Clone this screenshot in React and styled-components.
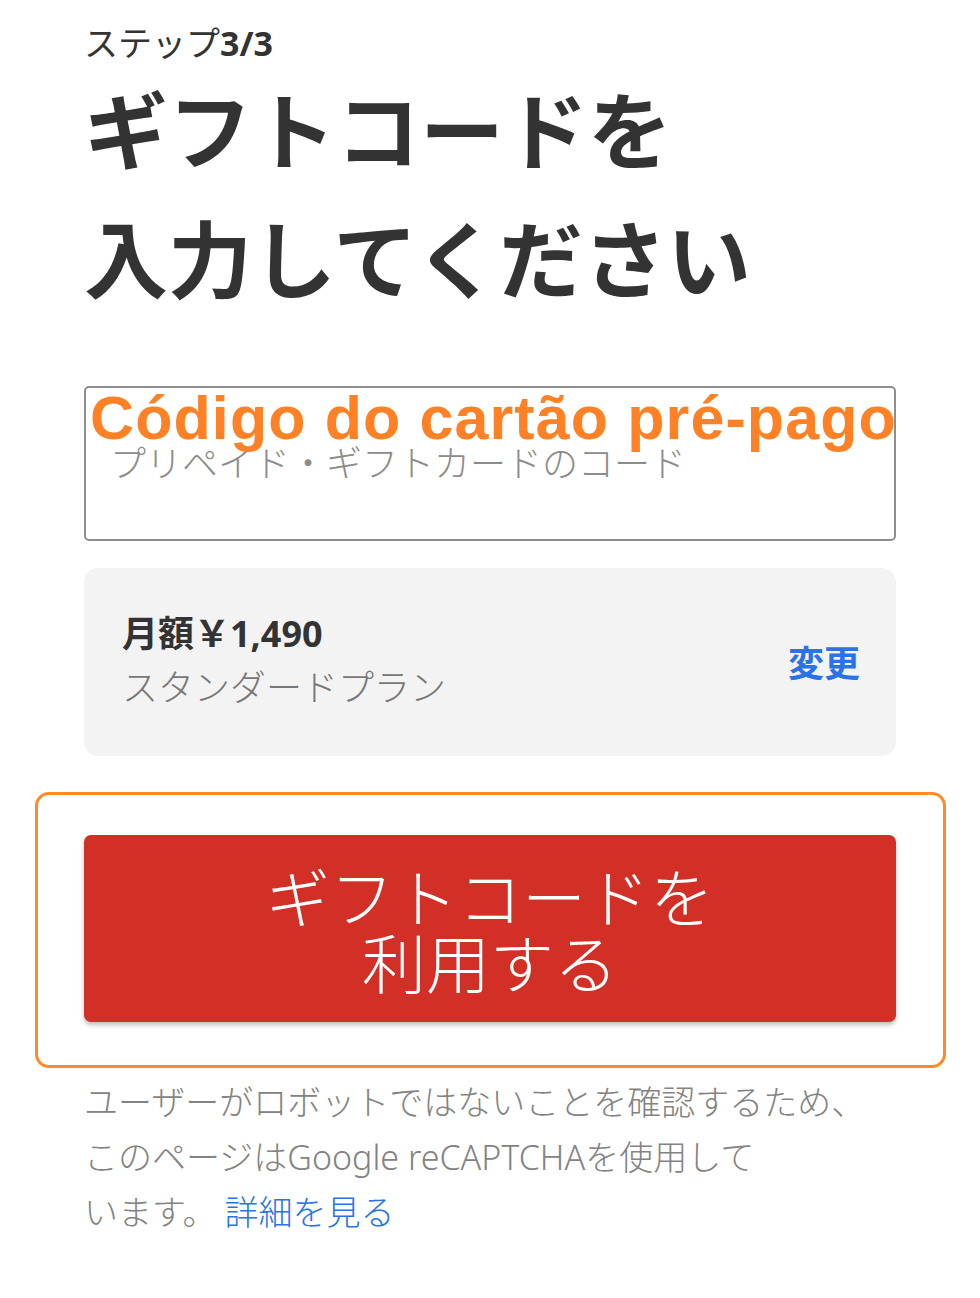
import React from "react"
import styled, { createGlobalStyle } from "styled-components"

const GlobalStyle = createGlobalStyle`
  html, body {
    margin: 0;
    padding: 0;
    background: #ffffff;
  }
  body {
    font-family: "Noto Sans", "Noto Sans CJK JP", sans-serif;
    color: #333333;
  }
`

const Page = styled.main`
  width: 812px;
  padding: 20px 0 60px 84px;
`

const Step = styled.div`
  font-size: 34px;
  line-height: 46px;
  font-weight: 400;
  color: #333333;
  b {
    font-weight: 700;
  }
`

const Title = styled.h1`
  margin: 0;
  font-size: 84px;
  line-height: 129px;
  font-weight: 700;
  color: #333333;
`

const Field = styled.label`
  position: relative;
  display: flex;
  flex-direction: column;
  box-sizing: border-box;
  height: 155px;
  margin-top: 62px;
  border: 2px solid #8e8e8e;
  border-radius: 5px;
  background: #fff;
`

const Overlay = styled.span`
  position: absolute;
  top: 0;
  left: 4px;
  font-family: "Liberation Sans", Arial, sans-serif;
  font-weight: 700;
  font-size: 61px;
  line-height: 1;
  letter-spacing: 1.1px;
  color: #ff8125;
  white-space: nowrap;
  pointer-events: none;
`

const Input = styled.input`
  margin-top: 46px;
  padding: 0 24px;
  height: 54px;
  border: none;
  outline: none;
  background: transparent;
  font-family: "Noto Sans CJK JP", sans-serif;
  font-size: 36px;
  font-weight: 300;
  color: #333;
  &::placeholder {
    color: #8c8c8c;
  }
`

const PlanCard = styled.section`
  display: flex;
  align-items: center;
  justify-content: space-between;
  box-sizing: border-box;
  height: 188px;
  margin-top: 27px;
  padding: 0 36px 2px 38px;
  background: #f3f3f3;
  border-radius: 14px;
`

const PlanInfo = styled.div`
  display: flex;
  flex-direction: column;
  font-size: 36px;
  line-height: 54px;
`

const Price = styled.span`
  font-weight: 700;
  color: #333333;
`

const PlanName = styled.span`
  font-weight: 300;
  color: #777777;
`

const Change = styled.a`
  font-size: 36px;
  font-weight: 700;
  color: #2a73e6;
  text-decoration: none;
`

const Highlight = styled.div`
  margin: 36px -50px 0 -49px;
  padding: 40px 47px 43px 46px;
  border: 3px solid #ff8a2b;
  border-radius: 14px;
`

const SubmitButton = styled.button`
  display: block;
  width: 100%;
  height: 187px;
  padding: 0 0 4px;
  border: none;
  border-radius: 7px;
  background: #d22f27;
  box-shadow: 0 3px 4px rgba(0, 0, 0, 0.25);
  color: #ffffff;
  font-family: "Noto Sans CJK JP", sans-serif;
  font-size: 64px;
  font-weight: 300;
  line-height: 66px;
`

const Notice = styled.p`
  margin: 7px 0 0;
  font-size: 34px;
  line-height: 55px;
  font-weight: 300;
  color: #838383;
`

const MoreLink = styled.a`
  color: #2a73e6;
  text-decoration: none;
  margin-left: 8px;
`

const App = () => {
  return (
    <>
      <GlobalStyle />
      <Page>
        <Step>
          ステップ<b>3/3</b>
        </Step>
        <Title>
          ギフトコードを
          <br />
          入力してください
        </Title>
        <Field>
          <Overlay>Código do cartão pré-pago</Overlay>
          <Input placeholder="プリペイド・ギフトカードのコード" />
        </Field>
        <PlanCard>
          <PlanInfo>
            <Price>月額￥1,490</Price>
            <PlanName>スタンダードプラン</PlanName>
          </PlanInfo>
          <Change href="#">変更</Change>
        </PlanCard>
        <Highlight>
          <SubmitButton type="button">
            ギフトコードを
            <br />
            利用する
          </SubmitButton>
        </Highlight>
        <Notice>
          ユーザーがロボットではないことを確認するため、
          <br />
          このページはGoogle reCAPTCHAを使用して
          <br />
          います。<MoreLink href="#">詳細を見る</MoreLink>
        </Notice>
      </Page>
    </>
  )
}

export default App
